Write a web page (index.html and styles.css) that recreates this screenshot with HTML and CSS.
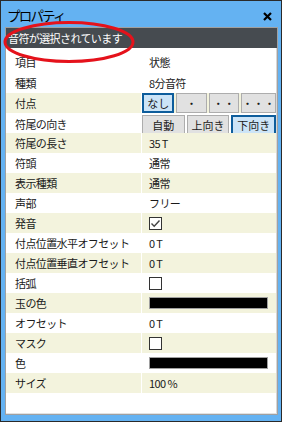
FILE: index.html
```html
<!DOCTYPE html>
<html lang="ja">
  <head>
    <meta charset="UTF-8" />
    <title>プロパティ</title>
    <link rel="stylesheet" href="styles.css">
  </head>
  <body>
    <div class="window">
      <div class="titlebar">
        <span class="title">プロパティ</span>
        <svg class="close" width="9" height="9" viewBox="0 0 9 9">
          <path d="M1 1 L8 8 M8 1 L1 8" stroke="#000" stroke-width="2.2" />
        </svg>
      </div>
      <div class="panel">
        <div class="status">音符が選択されています</div>
        <div class="grid">
          <div class="row head"><div class="name">項目</div><div class="value">状態</div></div>
          <div class="row"><div class="name">種類</div><div class="value">8分音符</div></div>
          <div class="row alt">
            <div class="name">付点</div>
            <div class="value btns">
              <span class="btn on">なし</span>
              <span class="btn">・</span>
              <span class="btn">・・</span>
              <span class="btn">・・・</span>
            </div>
          </div>
          <div class="row">
            <div class="name">符尾の向き</div>
            <div class="value btns small">
              <span class="btn">自動</span>
              <span class="btn">上向き</span>
              <span class="btn on">下向き</span>
            </div>
          </div>
          <div class="row alt"><div class="name">符尾の長さ</div><div class="value">35 T</div></div>
          <div class="row"><div class="name">符頭</div><div class="value">通常</div></div>
          <div class="row alt"><div class="name">表示種類</div><div class="value">通常</div></div>
          <div class="row"><div class="name">声部</div><div class="value">フリー</div></div>
          <div class="row alt">
            <div class="name">発音</div>
            <div class="value">
              <span class="check">
                <svg width="11" height="11" viewBox="0 0 11 11"><path d="M1.5 5.5 L4.2 8.2 L9.5 2.5" fill="none" stroke="#444" stroke-width="1.4" /></svg>
              </span>
            </div>
          </div>
          <div class="row"><div class="name">付点位置水平オフセット</div><div class="value">0 T</div></div>
          <div class="row alt"><div class="name">付点位置垂直オフセット</div><div class="value">0 T</div></div>
          <div class="row"><div class="name">括弧</div><div class="value"><span class="check"></span></div></div>
          <div class="row alt"><div class="name">玉の色</div><div class="value"><span class="swatch"></span></div></div>
          <div class="row"><div class="name">オフセット</div><div class="value">0 T</div></div>
          <div class="row alt"><div class="name">マスク</div><div class="value"><span class="check"></span></div></div>
          <div class="row"><div class="name">色</div><div class="value"><span class="swatch"></span></div></div>
          <div class="row alt"><div class="name">サイズ</div><div class="value">100 %</div></div>
        </div>
      </div>
      <svg class="mark" width="136" height="46" viewBox="0 0 136 46">
        <ellipse cx="67" cy="22" rx="64" ry="19.5" fill="none" stroke="#e5121b" stroke-width="3" />
      </svg>
    </div>
  </body>
</html>
```

FILE: styles.css
```css
body {
  margin: 0;
  font-family: "Noto Sans CJK JP", "Noto Sans", sans-serif;
  font-size: 11px;
  color: #1a1a1a;
}

.window {
  position: relative;
  width: 282px;
  height: 422px;
  box-sizing: border-box;
  border: 1px solid #2a2a2a;
  background: #64b2f2;
  padding: 0 3px 6px 4px;
  display: flex;
  flex-direction: column;
}

.titlebar {
  height: 26px;
  display: flex;
  align-items: center;
  justify-content: space-between;
  padding: 0 6px 0 2px;
}

.title {
  font-size: 13.5px;
  letter-spacing: -1.8px;
  color: #000;
  margin-top: 1px;
}

.close {
  margin-top: 4px;
}

.panel {
  flex: 1;
  background: #fff;
  border: 1px solid #a0a0a0;
  display: flex;
  flex-direction: column;
}

.status {
  height: 20px;
  background: #464b50;
  color: #fff;
  padding-left: 2px;
  line-height: 20px;
  letter-spacing: -0.6px;
}

.grid {
  flex: 1;
  border-right: 1px solid #d6d6d6;
  border-bottom: 1px solid #e2e2e2;
}

.row {
  display: grid;
  grid-template-columns: 135px 134px;
  column-gap: 1px;
  height: 20px;
}

.row.head {
  height: 25px;
  padding-top: 3px;
  box-sizing: border-box;
}

.row.alt .name,
.row.alt .value {
  background: #f3f3dd;
}

.name,
.value {
  display: flex;
  align-items: center;
  letter-spacing: -0.6px;
  white-space: nowrap;
}

.name {
  padding-left: 9px;
}

.value {
  padding-left: 7px;
}

.btns {
  padding-left: 0;
  gap: 2px;
  align-items: stretch;
}

.btns.small {
  padding-top: 2px;
}

.btn {
  flex: 1;
  display: flex;
  align-items: center;
  justify-content: center;
  background: #e1e1e1;
  border: 1px solid #adadad;
  letter-spacing: 0;
}

.btn.on {
  background: #cce4f7;
  border: 2px solid #0d5d9c;
}

.check {
  width: 11px;
  height: 11px;
  border: 1px solid #333;
  background: #fff;
  display: flex;
}

.swatch {
  width: 117px;
  height: 10px;
  background: #000;
  border: 1px solid #a0a0a0;
}

.mark {
  position: absolute;
  left: 1px;
  top: 19px;
}
```
